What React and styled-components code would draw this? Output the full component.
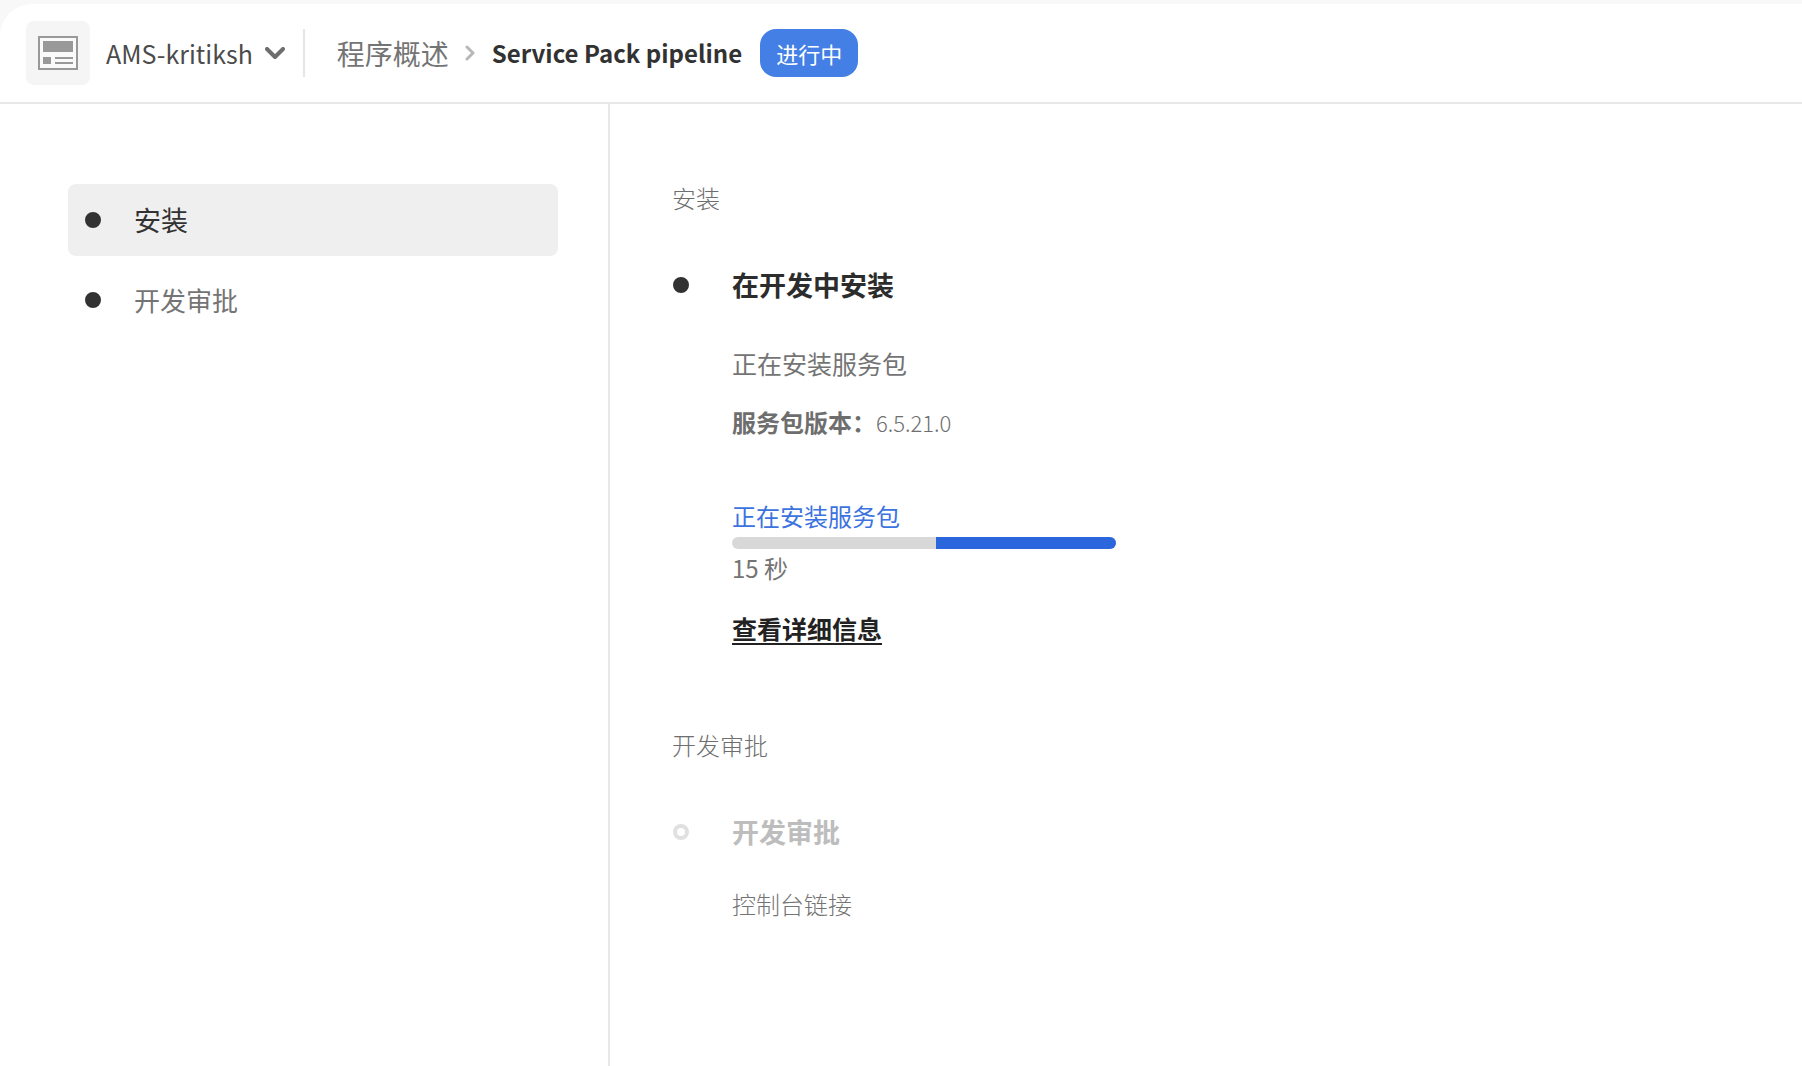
import React from "react";
import styled, { createGlobalStyle } from "styled-components";

const GlobalStyle = createGlobalStyle`
  *, *::before, *::after { box-sizing: border-box; }
  body {
    margin: 0;
    background: #f8f8f8;
    color: #6e6e6e;
    font-family: "Noto Sans CJK SC", "Noto Sans", sans-serif;
    font-size: 24px;
    line-height: 32px;
  }
  h1, h2, h3, p, ul, ol, dl, dd { margin: 0; padding: 0; }
  ul, ol { list-style: none; }
`;

const Shell = styled.div`
  display: flex;
  flex-direction: column;
  min-height: 100vh;
  padding-top: 4px;
`;

const TopBar = styled.header`
  display: flex;
  align-items: center;
  height: 100px;
  padding: 0 26px;
  background: #fff;
  border-bottom: 2px solid #e8e8e8;
  border-top-left-radius: 32px;
`;

const ProgramTile = styled.span`
  display: grid;
  place-items: center;
  width: 64px;
  height: 64px;
  margin-right: 16px;
  border-radius: 8px;
  background: #f5f5f5;
`;

const ProgramSwitcher = styled.button`
  display: flex;
  align-items: center;
  gap: 12px;
  padding: 0;
  border: 0;
  background: none;
  color: #4b4b4b;
  font: inherit;
  font-size: 25px;
  cursor: pointer;
`;

const Separator = styled.span`
  width: 2px;
  height: 48px;
  margin: 0 32px 0 18px;
  background: #e6e6e6;
`;

const Breadcrumbs = styled.nav`
  ol { display: flex; align-items: center; }
  li { display: flex; align-items: center; }
  svg { margin: 0 16px; }
`;

const CrumbLink = styled.a`
  color: #747474;
  font-size: 28px;
  text-decoration: none;
`;

const PageTitle = styled.h1`
  color: #323232;
  font-size: 24px;
  font-weight: 700;
  line-height: 32px;
`;

const StatusBadge = styled.span`
  margin-left: 18px;
  padding: 8px 16px;
  border-radius: 16px;
  background: #437fe5;
  color: #fff;
  font-size: 22px;
`;

const Body = styled.div`
  display: flex;
  flex: 1;
  background: #fff;
`;

const Sidebar = styled.nav`
  flex: 0 0 610px;
  padding: 80px 50px 0 68px;
  border-right: 2px solid #e8e8e8;

  ul { display: grid; gap: 8px; }
`;

const StageLink = styled.a`
  display: flex;
  align-items: center;
  gap: 33px;
  height: 72px;
  padding: 0 17px;
  border-radius: 8px;
  background: ${(p) => (p.$active ? "#efefef" : "transparent")};
  color: ${(p) => (p.$active ? "#323232" : "#747474")};
  font-size: ${(p) => (p.$active ? "27px" : "26px")};
  text-decoration: none;
`;

const Dot = styled.span`
  flex: none;
  width: 16px;
  height: 16px;
  border: ${(p) => (p.$pending ? "4px solid #e0e0e0" : "8px solid #323232")};
  border-radius: 50%;
`;

const Content = styled.main`
  display: flex;
  flex: 1;
  flex-direction: column;
  gap: 84px;
  min-width: 0;
  padding: 78px 64px 64px 62px;
`;

const StageLabel = styled.h2`
  margin-bottom: 55px;
  color: #6e6e6e;
  font-size: 24px;
  font-weight: 300;
  line-height: 32px;
`;

const StepHeader = styled.div`
  display: flex;
  align-items: center;
  gap: 43px;
  margin-bottom: ${(p) => (p.$pending ? "40px" : "46px")};
  padding-left: 1px;
`;

const StepTitle = styled.h3`
  color: ${(p) => (p.$pending ? "#bdbdbd" : "#2c2c2c")};
  font-size: 27px;
  font-weight: 700;
  line-height: 32px;
`;

const StepDetails = styled.div`
  padding-left: 60px;
`;

const Description = styled.p`
  color: #747474;
  font-size: ${(p) => (p.$small ? "24px" : "25px")};
  font-weight: ${(p) => (p.$light ? 300 : 400)};
`;

const Version = styled.dl`
  display: flex;
  align-items: baseline;
  margin: 27px 0 62px;

  dt { font-size: 24px; font-weight: 700; }
  dd { font-size: 22px; font-weight: 300; }
`;

const ActivityLabel = styled.p`
  margin-bottom: 5px;
  color: #3b73e0;
`;

const Track = styled.div`
  display: flex;
  justify-content: flex-end;
  max-width: 384px;
  height: 12px;
  margin-bottom: 3px;
  border-radius: 6px;
  background: #d8d8d8;
  overflow: hidden;
`;

const Segment = styled.span`
  width: 47%;
  background: #2b66dc;
`;

const DetailsLink = styled.a`
  display: inline-block;
  margin-top: 28px;
  color: #222;
  font-size: 25px;
  font-weight: 700;
  text-decoration: underline;
  text-decoration-thickness: 2px;
  text-underline-offset: 4px;
`;

const ProgramIcon = () => (
  <svg width="40" height="34" viewBox="0 0 40 34" aria-hidden="true">
    <path d="M1 1h38v32H1z" fill="#fafafa" stroke="#999" strokeWidth="2" />
    <path d="M5 5h30v11H5zM5 21h8v7H5zM17 21h18v2H17zM17 26h18v2H17z" fill="#999" />
  </svg>
);

const ChevronDown = () => (
  <svg width="20" height="13" viewBox="0 0 20 13" fill="none" aria-hidden="true">
    <path d="M2 2l8 8 8-8" stroke="#6e6e6e" strokeWidth="4" strokeLinecap="round" strokeLinejoin="round" />
  </svg>
);

const ChevronRight = () => (
  <svg width="11" height="16" viewBox="0 0 11 16" fill="none" aria-hidden="true">
    <path d="M2 2l6 6-6 6" stroke="#b8b8b8" strokeWidth="3" strokeLinecap="round" strokeLinejoin="round" />
  </svg>
);

export default function App() {
  return (
    <>
      <GlobalStyle />
      <Shell>
        <TopBar>
          <ProgramTile>
            <ProgramIcon />
          </ProgramTile>
          <ProgramSwitcher type="button" aria-haspopup="menu">
            AMS-kritiksh
            <ChevronDown />
          </ProgramSwitcher>
          <Separator />
          <Breadcrumbs>
            <ol>
              <li>
                <CrumbLink href="#overview">程序概述</CrumbLink>
                <ChevronRight />
              </li>
              <li>
                <PageTitle>Service Pack pipeline</PageTitle>
              </li>
            </ol>
          </Breadcrumbs>
          <StatusBadge>进行中</StatusBadge>
        </TopBar>
        <Body>
          <Sidebar>
            <ul>
              <li>
                <StageLink href="#install" aria-current="step" $active>
                  <Dot />
                  安装
                </StageLink>
              </li>
              <li>
                <StageLink href="#approval">
                  <Dot />
                  开发审批
                </StageLink>
              </li>
            </ul>
          </Sidebar>
          <Content>
            <section id="install">
              <StageLabel>安装</StageLabel>
              <StepHeader>
                <Dot />
                <StepTitle>在开发中安装</StepTitle>
              </StepHeader>
              <StepDetails>
                <Description>正在安装服务包</Description>
                <Version>
                  <dt>服务包版本：</dt>
                  <dd>6.5.21.0</dd>
                </Version>
                <ActivityLabel id="activity">正在安装服务包</ActivityLabel>
                <Track role="progressbar" aria-labelledby="activity">
                  <Segment />
                </Track>
                <Description $small>15 秒</Description>
                <DetailsLink href="#details">查看详细信息</DetailsLink>
              </StepDetails>
            </section>
            <section id="approval">
              <StageLabel>开发审批</StageLabel>
              <StepHeader $pending>
                <Dot $pending />
                <StepTitle $pending>开发审批</StepTitle>
              </StepHeader>
              <StepDetails>
                <Description $small $light>控制台链接</Description>
              </StepDetails>
            </section>
          </Content>
        </Body>
      </Shell>
    </>
  );
}
